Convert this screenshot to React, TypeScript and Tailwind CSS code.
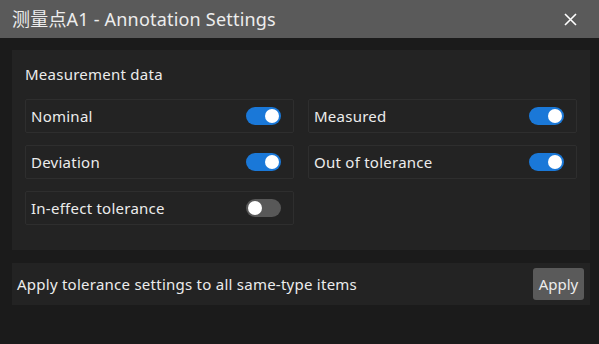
import { useState } from "react";

type ToggleProps = {
  on: boolean;
  onChange: () => void;
};

const Toggle = ({ on, onChange }: ToggleProps) => (
  <button
    type="button"
    onClick={onChange}
    className={`flex h-[18px] w-[35px] items-center rounded-full px-[2px] ${
      on ? "justify-end bg-[#1a78d8]" : "justify-start bg-[#585858]"
    }`}
  >
    <span className="h-[14px] w-[14px] rounded-full bg-white" />
  </button>
);

type OptionRowProps = {
  label: string;
  on: boolean;
  onChange: () => void;
};

const OptionRow = ({ label, on, onChange }: OptionRowProps) => (
  <div className="flex h-[34px] items-center justify-between rounded-[2px] border border-[#2e2e2e] pl-[5px] pr-[12px]">
    <span className="text-[15px] tracking-[0.25px] text-[#ececec]">{label}</span>
    <Toggle on={on} onChange={onChange} />
  </div>
);

export default function App() {
  const [opts, setOpts] = useState({
    nominal: true,
    measured: true,
    deviation: true,
    outOfTolerance: true,
    inEffect: false,
  });

  const flip = (key: keyof typeof opts) =>
    setOpts((o) => ({ ...o, [key]: !o[key] }));

  return (
    <div
      className="flex h-[344px] w-[599px] flex-col bg-[#1b1b1b]"
      style={{ fontFamily: '"Noto Sans", "Noto Sans CJK SC", sans-serif' }}
    >
      {/* title bar */}
      <div className="flex h-[38px] items-center justify-between bg-[#5a5a5a] pl-[12px] pr-[22px]">
        <span className="text-[18px] tracking-[0.2px] text-[#ededed]">
          测量点A1 - Annotation Settings
        </span>
        <button type="button" className="text-white">
          <svg width="13" height="13" viewBox="0 0 13 13">
            <path
              d="M1 1 L12 12 M12 1 L1 12"
              stroke="currentColor"
              strokeWidth="1.6"
            />
          </svg>
        </button>
      </div>

      <div className="flex flex-col gap-[13px] pl-[12px] pr-[9px] pt-[12px]">
        {/* measurement data */}
        <div className="flex h-[200px] flex-col bg-[#232323] px-[13px] pt-[14px]">
          <div className="text-[15px] leading-[20px] tracking-[0.25px] text-[#ececec]">
            Measurement data
          </div>
          <div className="mt-[15px] grid grid-cols-2 gap-x-[14px] gap-y-[12px]">
            <OptionRow
              label="Nominal"
              on={opts.nominal}
              onChange={() => flip("nominal")}
            />
            <OptionRow
              label="Measured"
              on={opts.measured}
              onChange={() => flip("measured")}
            />
            <OptionRow
              label="Deviation"
              on={opts.deviation}
              onChange={() => flip("deviation")}
            />
            <OptionRow
              label="Out of tolerance"
              on={opts.outOfTolerance}
              onChange={() => flip("outOfTolerance")}
            />
            <OptionRow
              label="In-effect tolerance"
              on={opts.inEffect}
              onChange={() => flip("inEffect")}
            />
          </div>
        </div>

        {/* apply row */}
        <div className="flex h-[42px] items-center justify-between bg-[#232323] pl-[5px] pr-[6px]">
          <span className="text-[15px] tracking-[0.25px] text-[#ececec]">
            Apply tolerance settings to all same-type items
          </span>
          <button
            type="button"
            className="h-[32px] w-[51px] rounded-[3px] bg-[#5a5a5a] text-[15px] text-[#ececec]"
          >
            Apply
          </button>
        </div>
      </div>
    </div>
  );
}
